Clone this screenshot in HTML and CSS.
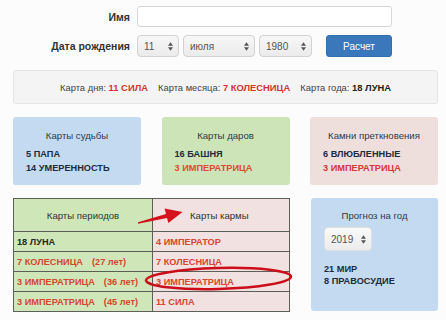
FILE: index.html
```html
<!DOCTYPE html>
<html lang="ru">
<head>
<meta charset="utf-8">
<title>Карты</title>
<link rel="stylesheet" href="styles.css">
</head>
<body>
<div class="page">
  <div class="form">
    <div class="frow">
      <div class="lbl">Имя</div>
      <div class="controls"><div class="input"></div></div>
    </div>
    <div class="frow">
      <div class="lbl">Дата рождения</div>
      <div class="controls">
        <div class="sel sel-day"><span>11</span><svg class="updown" viewBox="0 0 6 10" width="5" height="9"><path d="M3 0 L6 4 H0 Z M3 10 L0 6 H6 Z" fill="#555"/></svg></div>
        <div class="sel sel-month"><span>июля</span><svg class="updown" viewBox="0 0 6 10" width="5" height="9"><path d="M3 0 L6 4 H0 Z M3 10 L0 6 H6 Z" fill="#555"/></svg></div>
        <div class="sel sel-year"><span>1980</span><svg class="updown" viewBox="0 0 6 10" width="5" height="9"><path d="M3 0 L6 4 H0 Z M3 10 L0 6 H6 Z" fill="#555"/></svg></div>
        <div class="btn">Расчет</div>
      </div>
    </div>
  </div>

  <div class="infobar">
    <span class="item">Карта дня: <b class="red">11 СИЛА</b></span>
    <span class="item">Карта месяца: <b class="red">7 КОЛЕСНИЦА</b></span>
    <span class="item">Карта года: <b>18 ЛУНА</b></span>
  </div>

  <div class="cards">
    <div class="card blue">
      <div class="ctitle">Карты судьбы</div>
      <div class="citems"><b>5 ПАПА</b><b>14 УМЕРЕННОСТЬ</b></div>
    </div>
    <div class="card green">
      <div class="ctitle">Карты даров</div>
      <div class="citems"><b>16 БАШНЯ</b><b class="red2">3 ИМПЕРАТРИЦА</b></div>
    </div>
    <div class="card pink">
      <div class="ctitle">Камни преткновения</div>
      <div class="citems"><b>6 ВЛЮБЛЕННЫЕ</b><b class="red">3 ИМПЕРАТРИЦА</b></div>
    </div>
  </div>

  <div class="row2">
    <table class="karma">
      <thead>
        <tr><th class="cg">Карты периодов</th><th class="cp">Карты кармы</th></tr>
      </thead>
      <tbody>
        <tr><td class="cg dark">18 ЛУНА</td><td class="cp">4 ИМПЕРАТОР</td></tr>
        <tr><td class="cg">7 КОЛЕСНИЦА<span class="age">(27 лет)</span></td><td class="cp">7 КОЛЕСНИЦА</td></tr>
        <tr><td class="cg">3 ИМПЕРАТРИЦА<span class="age">(36 лет)</span></td><td class="cp">3 ИМПЕРАТРИЦА</td></tr>
        <tr><td class="cg">3 ИМПЕРАТРИЦА<span class="age">(45 лет)</span></td><td class="cp">11 СИЛА</td></tr>
      </tbody>
    </table>
    <div class="card blue forecast">
      <div class="ctitle">Прогноз на год</div>
      <div class="sel sel-fyear"><span>2019</span><svg class="updown" viewBox="0 0 6 10" width="5" height="9"><path d="M3 0 L6 4 H0 Z M3 10 L0 6 H6 Z" fill="#555"/></svg></div>
      <div class="citems"><b>21 МИР</b><b>8 ПРАВОСУДИЕ</b></div>
    </div>
    <svg class="annot" width="290" height="100" viewBox="0 0 290 100">
      <polygon points="125,24.3 153,16 151.6,10.5 169.5,14 155.4,25 154,20 125,25.7" fill="#d3121b"/>
      <ellipse cx="205.5" cy="80.5" rx="72.5" ry="10.5" fill="none" stroke="#cc0e1a" stroke-width="2.6" transform="rotate(-1.5 205.5 80.5)"/>
    </svg>
  </div>
</div>
</body>
</html>
```

FILE: styles.css
```css
html, body {
  margin: 0;
  padding: 0;
}
body {
  background: #fcfcfc;
  font-family: "Liberation Sans", Arial, sans-serif;
  color: #333;
}
.page {
  width: 425px;
  padding: 6px 0 0 13px;
}
.form {
  display: flex;
  flex-direction: column;
  gap: 8px;
}
.frow {
  display: flex;
  align-items: center;
  gap: 7px;
}
.lbl {
  width: 117px;
  text-align: right;
  font-weight: bold;
  font-size: 10.5px;
  color: #333;
}
.controls {
  display: flex;
  align-items: center;
  gap: 4px;
}
.input {
  width: 253px;
  height: 19px;
  background: #fff;
  border: 1px solid #d6d6d6;
  border-radius: 3px;
}
.sel {
  box-sizing: border-box;
  height: 22px;
  display: flex;
  align-items: center;
  justify-content: space-between;
  padding: 0 5px 0 6px;
  background: linear-gradient(#f7f7f7, #ebebeb);
  border: 1px solid #d2d2d2;
  border-radius: 4px;
  font-size: 10px;
  color: #555;
}
.sel-day { width: 42px; }
.sel-month { width: 72px; }
.sel-year { width: 53px; }
.btn {
  margin-left: 10px;
  width: 66px;
  height: 22px;
  box-sizing: border-box;
  background: #3a78bb;
  border: 1px solid #3570ae;
  border-radius: 3px;
  color: #fff;
  font-size: 10px;
  display: flex;
  align-items: center;
  justify-content: center;
}
.infobar {
  margin-top: 13px;
  box-sizing: border-box;
  height: 34px;
  background: #f4f4f4;
  border: 1px solid #e4e4e4;
  border-radius: 3px;
  display: flex;
  justify-content: center;
  align-items: center;
  gap: 10px;
  font-size: 9.4px;
  color: #444;
}
.infobar b { color: #222; }
.infobar b.red { color: #d2352f; }
.cards {
  margin-top: 13px;
  display: grid;
  grid-template-columns: 128px 128px 128px;
  column-gap: 20.5px;
}
.card {
  box-sizing: border-box;
  height: 68px;
  border-radius: 3px;
  padding: 13px 13px 0 13px;
}
.blue { background: #c3daf0; }
.green { background: #cce4b7; }
.pink { background: #eedfdd; }
.ctitle {
  text-align: center;
  font-size: 9.6px;
  color: #2f3a48;
  line-height: 12px;
}
.citems {
  margin-top: 5px;
  display: flex;
  flex-direction: column;
  font-size: 9.2px;
  line-height: 14px;
  color: #1e2b3c;
}
.red { color: #d8353a; }
.red2 { color: #df4a2e; }
.row2 {
  position: relative;
  margin-top: 13px;
  display: flex;
  gap: 21px;
  align-items: flex-start;
}
.karma {
  width: 277px;
  border-collapse: collapse;
  font-size: 9.2px;
}
.karma th, .karma td {
  border: 1px solid #5b5f58;
  text-align: left;
  padding: 0 3px;
}
.karma th {
  height: 32px;
  font-weight: normal;
  text-align: center;
  font-size: 9.6px;
  color: #2f3432;
}
.karma th.cp { text-align: left; padding-left: 37px; }
.karma td {
  height: 19px;
  font-weight: bold;
  color: #d5472f;
}
.karma td.cg { width: 132px; }
.karma td.dark { color: #1f2a22; }
.cg { background: #cfe6b9; }
.cp { background: #f1e1e0; }
.age { margin-left: 9px; }
.forecast {
  width: 127px;
  height: 113px;
  padding: 12px 0 0 13px;
}
.forecast .ctitle { padding-right: 13px; }
.sel-fyear {
  margin-top: 5px;
  width: 48px;
  height: 24px;
  background: linear-gradient(#f9f9f9, #ececec);
  border-color: #e0e0e0;
}
.forecast .citems { margin-top: 13px; line-height: 11.5px; }
.annot {
  position: absolute;
  left: 0;
  top: 0;
  pointer-events: none;
}
```
